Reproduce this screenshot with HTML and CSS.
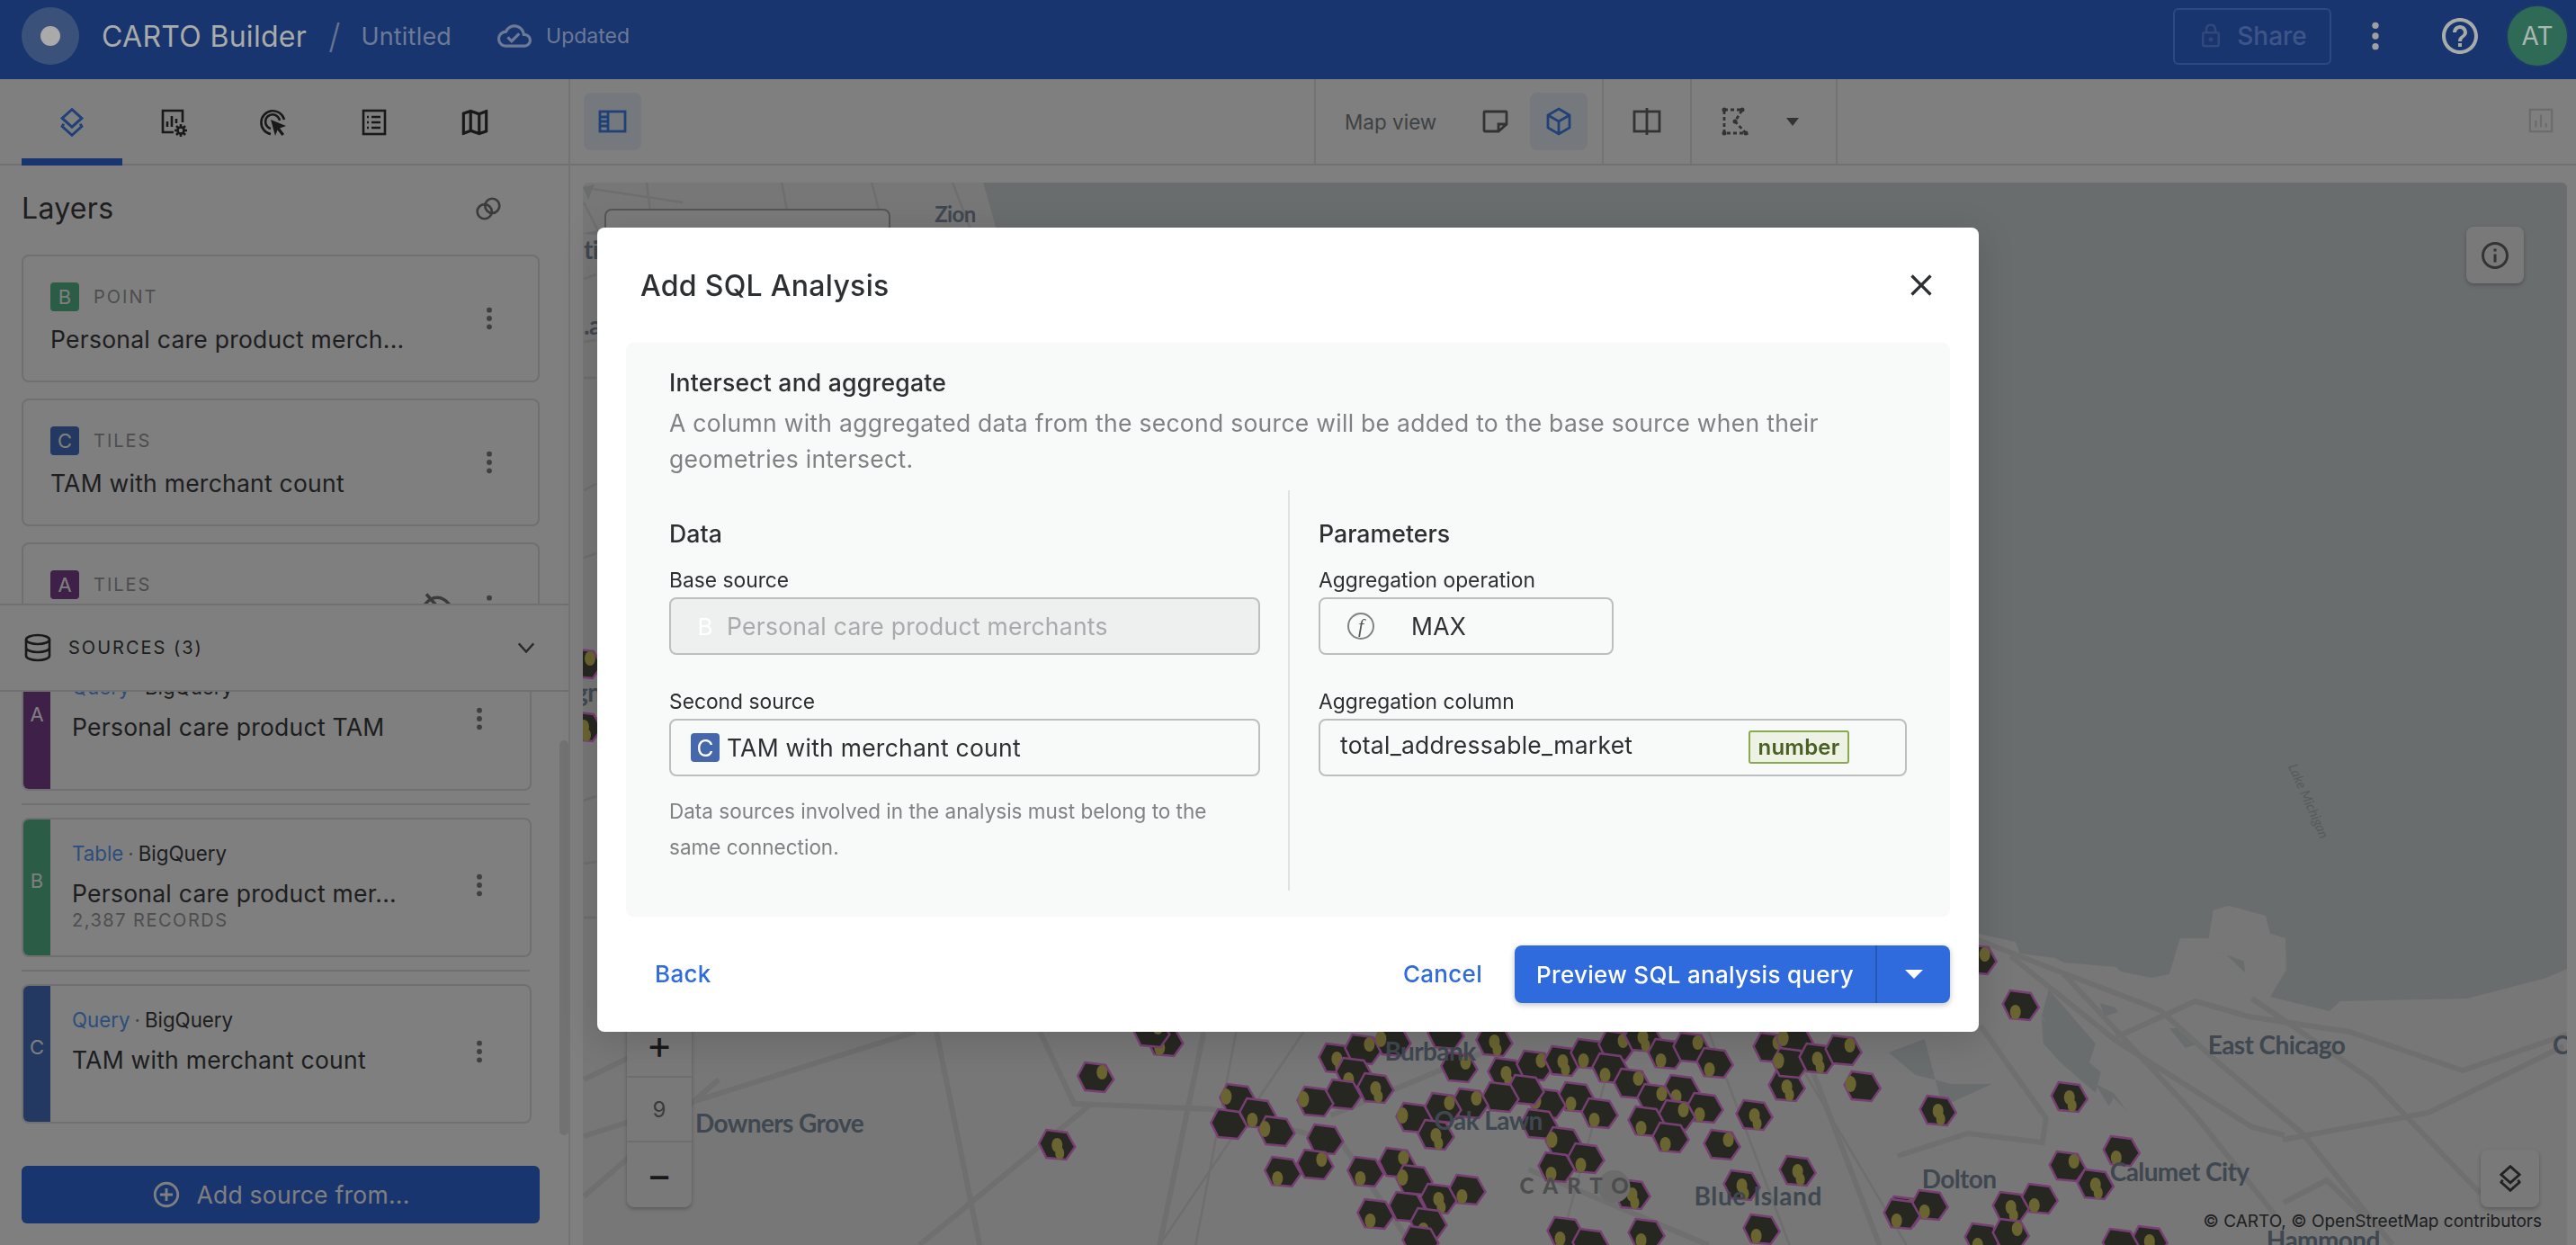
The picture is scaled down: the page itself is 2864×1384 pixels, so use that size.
FILE: index.html
```html
<!DOCTYPE html>
<html lang="en">
<head>
<meta charset="utf-8">
<title>CARTO Builder</title>
<link rel="stylesheet" href="styles.css">
</head>
<body>
<header class="topbar">
  <div class="logo"><span class="logo-dot"></span></div>
  <span class="brand">CARTO Builder</span>
  <span class="slash">/</span>
  <span class="doc-name">Untitled</span>
  <svg class="cloud" viewBox="0 0 24 24"><path d="M19.35 10.04C18.67 6.59 15.64 4 12 4 9.11 4 6.6 5.64 5.35 8.04 2.34 8.36 0 10.91 0 14c0 3.31 2.69 6 6 6h13c2.76 0 5-2.24 5-5 0-2.64-2.05-4.78-4.65-4.96zM19 18H6c-2.21 0-4-1.79-4-4 0-2.05 1.53-3.76 3.56-3.97l1.07-.11.5-.95C8.08 7.14 9.94 6 12 6c2.62 0 4.88 1.86 5.39 4.43l.3 1.5 1.53.11c1.56.1 2.78 1.41 2.78 2.96 0 1.65-1.35 3-3 3zm-9-3.82l-2.09-2.09L6.5 13.5 10 17l6.01-6.01-1.41-1.41z"/></svg>
  <span class="status">Updated</span>
  <div class="topbar-right">
    <div class="share">
      <svg class="share-lock" viewBox="0 0 24 24"><path d="M18 8h-1V6c0-2.76-2.24-5-5-5S7 3.24 7 6v2H6c-1.1 0-2 .9-2 2v10c0 1.1.9 2 2 2h12c1.1 0 2-.9 2-2V10c0-1.1-.9-2-2-2zM9 6c0-1.66 1.34-3 3-3s3 1.34 3 3v2H9V6zm9 14H6V10h12v10zm-6-3c1.1 0 2-.9 2-2s-.9-2-2-2-2 .9-2 2 .9 2 2 2z"/></svg>
      <span>Share</span>
    </div>
    <svg class="top-kebab" viewBox="0 0 24 24"><circle cx="12" cy="5" r="2.2"/><circle cx="12" cy="12" r="2.2"/><circle cx="12" cy="19" r="2.2"/></svg>
    <svg class="help" viewBox="0 0 24 24"><path d="M11 18h2v-2h-2v2zm1-16C6.48 2 2 6.48 2 12s4.48 10 10 10 10-4.48 10-10S17.52 2 12 2zm0 18c-4.41 0-8-3.59-8-8s3.59-8 8-8 8 3.59 8 8-3.59 8-8 8zm0-14c-2.21 0-4 1.79-4 4h2c0-1.1.9-2 2-2s2 .9 2 2c0 2-3 1.75-3 5h2c0-2.25 3-2.5 3-5 0-2.21-1.79-4-4-4z"/></svg>
    <div class="avatar">AT</div>
  </div>
</header>

<div class="workspace">
  <aside class="sidebar">
    <nav class="tabs">
      <div class="tab active">
        <svg class="tab-icon" viewBox="0 0 28 28"><path d="M14 1.5 23.5 10 14 18.5 4.500 10z"/><path d="M6 15.500 4.500 18 14 26.500 23.500 18 22 15.500"/></svg>
      </div>
      <div class="tab">
        <svg class="tab-icon" viewBox="0 0 32 32"><path d="M17 27H5V3h22v13"/><path d="M10 21v-6M15 21V9M20 17v-5"/><circle cx="25" cy="25" r="3.500"/><path d="M25 18v3M25 29v3M18 25h3M29 25h3M20 20l2 2M28 28l2 2M30 20l-2 2M22 28l-2 2"/></svg>
      </div>
      <div class="tab">
        <svg class="tab-icon" viewBox="0 0 32 32"><path d="M13 29A13 13 0 1 1 28 13"/><path d="M13 23a8 8 0 1 1 10-9"/><path class="solid" d="M13 13l17 7-7 2.500L28 29l-2.500 2-5-6.500L18 31z"/></svg>
      </div>
      <div class="tab">
        <svg class="tab-icon" viewBox="0 0 32 32"><rect x="4" y="3" width="24" height="26"/><path d="M13 10h10M13 16h10M13 22h10M8 10h2M8 16h2M8 22h2"/></svg>
      </div>
      <div class="tab">
        <svg class="tab-icon solid-icon" viewBox="0 0 24 24"><path d="M20.500 3l-.16.03L15 5.100 9 3 3.360 4.900c-.21.07-.36.25-.36.48V20.500c0 .28.22.5.5.5l.16-.03L9 18.900l6 2.100 5.640-1.900c.21-.07.36-.25.36-.48V3.500c0-.28-.22-.5-.5-.5zM10 5.470l4 1.400v11.660l-4-1.400V5.470zm-5 .99l3-1.010v11.700l-3 1.160V6.460zm14 11.080l-3 1.010V6.860l3-1.160v11.840z"/></svg>
      </div>
    </nav>

    <section class="layers-panel">
      <div class="panel-head">
        <h2 class="panel-title">Layers</h2>
        <svg class="link-icon" viewBox="0 0 28 28"><circle cx="10" cy="17" r="7.500"/><circle cx="18" cy="11" r="7.500"/></svg>
      </div>
      <article class="layer-card">
        <div class="layer-text">
          <div class="layer-type"><span class="chip chip-b">B</span><span>POINT</span></div>
          <div class="layer-name">Personal care product merch...</div>
        </div>
        <svg class="kebab" viewBox="0 0 24 24"><circle cx="12" cy="5" r="2.200"/><circle cx="12" cy="12" r="2.200"/><circle cx="12" cy="19" r="2.200"/></svg>
      </article>
      <article class="layer-card">
        <div class="layer-text">
          <div class="layer-type"><span class="chip chip-c">C</span><span>TILES</span></div>
          <div class="layer-name">TAM with merchant count</div>
        </div>
        <svg class="kebab" viewBox="0 0 24 24"><circle cx="12" cy="5" r="2.200"/><circle cx="12" cy="12" r="2.200"/><circle cx="12" cy="19" r="2.200"/></svg>
      </article>
      <article class="layer-card">
        <div class="layer-text">
          <div class="layer-type"><span class="chip chip-a">A</span><span>TILES</span></div>
          <div class="layer-name">Personal care product TAM</div>
        </div>
        <svg class="eye-off" viewBox="0 0 24 24"><path d="M2 12c3-4.500 6.500-6.500 10-6.500S19 7.500 22 12c-3 4.500-6.500 6.500-10 6.500S5 16.500 2 12zM4 3l16 18"/></svg>
        <svg class="kebab" viewBox="0 0 24 24"><circle cx="12" cy="5" r="2.200"/><circle cx="12" cy="12" r="2.200"/><circle cx="12" cy="19" r="2.200"/></svg>
      </article>
    </section>

    <div class="sources-bar">
      <svg class="db-icon" viewBox="0 0 32 32"><ellipse cx="16" cy="7" rx="13" ry="5"/><path d="M3 7v18c0 2.800 5.800 5 13 5s13-2.200 13-5V7M3 16c0 2.800 5.800 5 13 5s13-2.200 13-5"/></svg>
      <span class="sources-label">SOURCES (3)</span>
      <svg class="chev" viewBox="0 0 24 24"><path d="M3 7l9 10 9-10"/></svg>
    </div>

    <div class="source-list">
      <article class="source-card first">
        <div class="source-bar bar-a">A</div>
        <div class="source-text">
          <div class="source-kind"><span class="kind">Query</span><span class="sep">·</span><span>BigQuery</span></div>
          <div class="source-name">Personal care product TAM</div>
        </div>
        <svg class="kebab" viewBox="0 0 24 24"><circle cx="12" cy="5" r="2.200"/><circle cx="12" cy="12" r="2.200"/><circle cx="12" cy="19" r="2.200"/></svg>
      </article>
      <div class="source-divider"></div>
      <article class="source-card">
        <div class="source-bar bar-b">B</div>
        <div class="source-text">
          <div class="source-kind"><span class="kind">Table</span><span class="sep">·</span><span>BigQuery</span></div>
          <div class="source-name">Personal care product mer...</div>
          <div class="records">2,387 RECORDS</div>
        </div>
        <svg class="kebab" viewBox="0 0 24 24"><circle cx="12" cy="5" r="2.200"/><circle cx="12" cy="12" r="2.200"/><circle cx="12" cy="19" r="2.200"/></svg>
      </article>
      <div class="source-divider"></div>
      <article class="source-card">
        <div class="source-bar bar-c">C</div>
        <div class="source-text">
          <div class="source-kind"><span class="kind">Query</span><span class="sep">·</span><span>BigQuery</span></div>
          <div class="source-name">TAM with merchant count</div>
        </div>
        <svg class="kebab" viewBox="0 0 24 24"><circle cx="12" cy="5" r="2.200"/><circle cx="12" cy="12" r="2.200"/><circle cx="12" cy="19" r="2.200"/></svg>
      </article>
    </div>
    <div class="scroll-thumb"></div>

    <div class="add-wrap">
      <div class="add-btn">
        <svg class="add-icon" viewBox="0 0 24 24"><path d="M13 7h-2v4H7v2h4v4h2v-4h4v-2h-4V7zm-1-5C6.480 2 2 6.480 2 12s4.480 10 10 10 10-4.480 10-10S17.520 2 12 2zm0 18c-4.410 0-8-3.590-8-8s3.590-8 8-8 8 3.590 8 8-3.590 8-8 8z"/></svg>
        <span>Add source from...</span>
      </div>
    </div>
  </aside>

  <main class="stage">
    <div class="toolbar">
      <div class="tool-group left">
        <div class="tool-btn selected">
          <svg class="tool-icon blue" viewBox="0 0 32 32"><rect x="2" y="5" width="28" height="22"/><path d="M11 5v22M2 11h9M2 16h9M2 21h9"/></svg>
        </div>
      </div>
      <div class="tool-group view">
        <span class="map-view">Map view</span>
        <div class="tool-btn narrow">
          <svg class="tool-icon" viewBox="0 0 32 32"><path d="M29 19V6a1 1 0 0 0-1-1H5a1 1 0 0 0-1 1v20a1 1 0 0 0 1 1h15zM20 27v-8h9"/></svg>
        </div>
        <div class="tool-btn selected">
          <svg class="tool-icon blue" viewBox="0 0 32 32"><path d="M16 2 28 9v14l-12 7-12-7V9zM4 9l12 7 12-7M16 16v14"/></svg>
        </div>
      </div>
      <div class="tool-group split">
        <svg class="tool-icon" viewBox="0 0 32 32"><rect x="2" y="5" width="28" height="22"/><path d="M16 1v30"/></svg>
      </div>
      <div class="tool-group poly">
        <svg class="tool-icon" viewBox="0 0 32 32"><path stroke-dasharray="4 3" d="M4 3h20l-8 13 12 13H4z"/><circle cx="4" cy="3" r="2.500"/><circle cx="24" cy="3" r="2.500"/><circle cx="16" cy="16" r="2.500"/><circle cx="28" cy="29" r="2.500"/><circle cx="4" cy="29" r="2.500"/></svg>
        <span class="caret"></span>
      </div>
      <svg class="chart-toggle" viewBox="0 0 32 32"><rect x="3" y="3" width="26" height="26"/><path d="M10 24v-8M16 24V9M22 24v-5"/></svg>
    </div>

    <div class="map-wrap">
      <div class="map">
        <svg class="map-canvas" viewBox="649 203 2205 1181" preserveAspectRatio="none">
          <defs>
            <polygon id="hx" points="-12,-17 11,-14 20,2 10,16 -12,14 -20,-2"/>
            <g id="a"><use href="#hx"/><ellipse class="dot" cx="-6" cy="7" rx="6" ry="8"/></g>
            <g id="b"><use href="#hx"/><ellipse class="dot" cx="7" cy="-6" rx="6" ry="8"/></g>
            <g id="c"><use href="#hx"/><ellipse class="dot" cx="0" cy="0" rx="6" ry="8"/><ellipse class="dot" cx="3" cy="9" rx="5" ry="7"/></g>
            <g id="d"><use href="#hx"/><ellipse class="dot" cx="-13" cy="-3" rx="6" ry="9"/></g>
            <g id="e"><use href="#hx"/></g>
          </defs>
          <rect class="land" x="649" y="203" width="2205" height="1181"/>
          <polygon class="water" points="1094,203 1108,253 1200,1000 2200,1038 2241,1047 2246,1060 2285,1065 2295,1070 2353,1075 2358,1080 2392,1087 2412,1083 2424,1043 2451,1053 2495,1068 2497,1082 2456,1043 2461,1012 2478,1007 2519,1018 2524,1038 2541,1043 2542,1078 2524,1108 2590,1124 2602,1113 2743,1110 2831,1087 2854,1077 2854,203"/>
          <polygon class="land" points="2424,1043 2456,1043 2461,1012 2478,1007 2519,1018 2524,1038 2541,1043 2542,1078 2524,1108 2497,1085 2495,1068 2451,1053"/>
          <g class="water">
            <polygon points="2278,1100 2330,1160 2322,1185 2306,1175 2270,1130"/>
            <polygon points="2270,1132 2310,1170 2336,1192 2330,1215 2290,1180 2272,1160"/>
            <polygon points="2335,1115 2352,1120 2355,1125 2340,1130"/>
            <polygon points="2412,1143 2428,1143 2445,1160 2430,1165"/>
            <polygon points="2100,1170 2140,1155 2160,1230 2215,1205 2170,1205 2130,1195"/>
            <polygon points="2330,1205 2350,1215 2365,1235 2350,1220 2345,1230"/>
            <polygon points="649,208 662,205 655,222"/>
            <polygon points="648,260 690,250 680,262"/>
          </g>
          <g class="road-thin">
            <path d="M660 210 L760 225M720 203 L725 245M870 203 L880 255M970 203 L985 260M1060 203 L1080 255M650 225 L690 305M650 310L664 305M650 380L664 378M650 420L664 420M650 545L664 538M650 620L664 615M650 890L664 885M650 960L664 958M650 1020L664 1020"/>
            <path d="M1450 1147 L1290 1384M1375 1147 L1330 1384M1980 1147 L2120 1384M1900 1147 L1990 1384M1800 1147 L1735 1384"/>
          </g>
          <g class="road">
            <path d="M2200 1045 L2295 1082 L2402 1123 L2465 1180 L2560 1260 L2660 1384"/>
            <path d="M2236 1063 L2353 1157 L2504 1253 L2540 1262"/>
            <path d="M2295 1083 L2441 1240 L2529 1350"/>
            <path d="M2353 1153 L2441 1113 L2500 1130 L2612 1147 L2738 1190 L2854 1150"/>
            <path d="M2538 1267 L2700 1237 L2850 1163"/>
            <path d="M2504 1110 L2636 1200 L2758 1327"/>
            <path d="M2202 1140 L2275 1243 L2271 1270 L2188 1260 L2110 1285"/>
            <path d="M2539 1337 L2587 1312 L2626 1350"/>
            <path d="M1018 1147 L650 1263M1042 1147 L1090 1384M1157 1147 L1195 1227 L1348 1233 L1492 1270 L1570 1384M1214 1227 L1023 1384"/>
            <path d="M1339 1147 L1290 1384M1480 1240 L1650 1170M1700 1300 L1900 1384M2000 1150 L2090 1384M650 1200 L760 1147M650 1330 L800 1200"/>
          </g>
          <g class="hexes">
            <use href="#a" x="1296" y="1158"/><use href="#b" x="1281" y="1148"/><use href="#b" x="1219" y="1198"/><use href="#c" x="1176" y="1273"/><use href="#d" x="1377" y="1222"/><use href="#a" x="1399" y="1238"/><use href="#e" x="1367" y="1250"/><use href="#d" x="1420" y="1258"/><use href="#e" x="1474" y="1267"/><use href="#b" x="1463" y="1295"/><use href="#a" x="1427" y="1303"/><use href="#c" x="1487" y="1177"/><use href="#b" x="1516" y="1167"/><use href="#d" x="1549" y="1158"/><use href="#a" x="1506" y="1193"/><use href="#c" x="1530" y="1210"/><use href="#e" x="1494" y="1217"/><use href="#d" x="1463" y="1225"/><use href="#b" x="1623" y="1187"/><use href="#c" x="1662" y="1158"/><use href="#e" x="1608" y="1150"/><use href="#c" x="1675" y="1193"/><use href="#b" x="1707" y="1185"/><use href="#c" x="1738" y="1180"/><use href="#a" x="1767" y="1172"/><use href="#b" x="1798" y="1163"/><use href="#c" x="1827" y="1153"/><use href="#a" x="1853" y="1172"/><use href="#b" x="1881" y="1165"/><use href="#a" x="1907" y="1182"/><use href="#a" x="1791" y="1188"/><use href="#b" x="1815" y="1205"/><use href="#a" x="1870" y="1212"/><use href="#b" x="1841" y="1222"/><use href="#a" x="1896" y="1232"/><use href="#b" x="1865" y="1240"/><use href="#a" x="1831" y="1247"/><use href="#a" x="1858" y="1265"/><use href="#c" x="1951" y="1240"/><use href="#b" x="1915" y="1273"/><use href="#a" x="1753" y="1220"/><use href="#a" x="1779" y="1238"/><use href="#d" x="1721" y="1227"/><use href="#e" x="1697" y="1212"/><use href="#e" x="1669" y="1220"/><use href="#b" x="1635" y="1227"/><use href="#b" x="1605" y="1232"/><use href="#d" x="1573" y="1243"/><use href="#c" x="1597" y="1262"/><use href="#e" x="1712" y="1250"/><use href="#d" x="1739" y="1270"/><use href="#a" x="1764" y="1288"/><use href="#a" x="1731" y="1298"/><use href="#b" x="1554" y="1293"/><use href="#a" x="1519" y="1303"/><use href="#d" x="1573" y="1312"/><use href="#a" x="1632" y="1323"/><use href="#c" x="1600" y="1333"/><use href="#e" x="1565" y="1342"/><use href="#a" x="1530" y="1350"/><use href="#a" x="1589" y="1360"/><use href="#e" x="1580" y="1380"/><use href="#a" x="1741" y="1370"/><use href="#e" x="1769" y="1383"/><use href="#a" x="1831" y="1372"/><use href="#c" x="1815" y="1328"/><use href="#c" x="1937" y="1318"/><use href="#c" x="1999" y="1302"/><use href="#a" x="1959" y="1367"/><use href="#d" x="2071" y="1208"/><use href="#c" x="1987" y="1208"/><use href="#b" x="1970" y="1165"/><use href="#d" x="1996" y="1157"/><use href="#d" x="1991" y="1182"/><use href="#c" x="2021" y="1177"/><use href="#b" x="2050" y="1168"/><use href="#b" x="2118" y="1347"/><use href="#b" x="2200" y="1067"/><use href="#a" x="2247" y="1118"/><use href="#c" x="2301" y="1220"/><use href="#c" x="2155" y="1235"/><use href="#a" x="2359" y="1280"/><use href="#b" x="2299" y="1297"/><use href="#c" x="2330" y="1317"/><use href="#a" x="2268" y="1333"/><use href="#c" x="2236" y="1342"/><use href="#a" x="2146" y="1340"/><use href="#a" x="2115" y="1350"/><use href="#a" x="2205" y="1377"/><use href="#b" x="2236" y="1372"/><use href="#c" x="2390" y="1380"/><use href="#e" x="2358" y="1383"/><use href="#b" x="650" y="738"/><use href="#c" x="650" y="808"/>
          </g>
          <g class="labels">
            <text x="1040" y="247" class="lab-sm">Zion</text>
            <text x="650" y="288">tic</text>
            <text x="650" y="372">.a</text>
            <text x="640" y="780">gn</text>
            <text x="774" y="1259">Downers Grove</text>
            <text x="1540" y="1179">Burbank</text>
            <text x="1595" y="1256">Oak Lawn</text>
            <text x="1884" y="1340" class="wide">Blue Island</text>
            <text x="2137" y="1321">Dolton</text>
            <text x="2346" y="1313">Calumet City</text>
            <text x="2455" y="1172">East Chicago</text>
            <text x="2520" y="1389">Hammond</text>
            <text x="2838" y="1172">C</text>
            <text class="lake" transform="translate(2544 852) rotate(66)">Lake Michigan</text>
          </g>
          <circle class="wm-circle" cx="1795" cy="1319" r="18"/>
          <text class="watermark" x="1690" y="1327">CARTO</text>
        </svg>
        <div class="map-search"></div>
        <div class="map-btn info">
          <svg class="map-btn-icon" viewBox="0 0 24 24"><path d="M11 7h2v2h-2zm0 4h2v6h-2zm1-9C6.480 2 2 6.480 2 12s4.480 10 10 10 10-4.480 10-10S17.520 2 12 2zm0 18c-4.410 0-8-3.590-8-8s3.590-8 8-8 8 3.590 8 8-3.590 8-8 8z"/></svg>
        </div>
        <div class="zoom-ctl">
          <div class="zoom-cell zoom-sym">+</div>
          <div class="zoom-cell zoom-num">9</div>
          <div class="zoom-cell zoom-sym">−</div>
        </div>
        <div class="map-btn basemap">
          <svg class="basemap-icon" viewBox="0 0 28 28"><path d="M14 1.500 23.500 10 14 18.500 4.500 10z"/><path d="M6 15.500 4.500 18 14 26.500 23.500 18 22 15.500"/></svg>
        </div>
        <div class="attrib">© CARTO, © OpenStreetMap contributors</div>
      </div>
    </div>
  </main>
</div>

<div class="scrim"></div>

<div class="dialog-layer">
  <div class="dialog" role="dialog">
    <div class="dialog-head">
      <h1 class="dialog-title">Add SQL Analysis</h1>
      <svg class="close" viewBox="0 0 24 24"><path d="M19 6.410 17.590 5 12 10.590 6.410 5 5 6.410 10.590 12 5 17.590 6.410 19 12 13.410 17.590 19 19 17.590 13.410 12z"/></svg>
    </div>
    <div class="dialog-body">
      <h3 class="body-title">Intersect and aggregate</h3>
      <p class="body-desc">A column with aggregated data from the second source will be added to the base source when their geometries intersect.</p>
      <div class="cols">
        <div class="col col-left">
          <h4 class="col-title">Data</h4>
          <label class="field-label">Base source</label>
          <div class="field disabled"><span class="field-chip ghost">B</span><span>Personal care product merchants</span></div>
          <label class="field-label second">Second source</label>
          <div class="field"><span class="field-chip solid-c">C</span><span>TAM with merchant count</span></div>
          <p class="helper">Data sources involved in the analysis must belong to the same connection.</p>
        </div>
        <div class="col col-right">
          <h4 class="col-title">Parameters</h4>
          <label class="field-label">Aggregation operation</label>
          <div class="field op">
            <span class="fx">f</span>
            <span>MAX</span>
          </div>
          <label class="field-label second">Aggregation column</label>
          <div class="field column">
            <span>total_addressable_market</span>
            <span class="tag">number</span>
          </div>
        </div>
      </div>
    </div>
    <div class="dialog-foot">
      <span class="text-btn back">Back</span>
      <span class="text-btn cancel">Cancel</span>
      <div class="primary">
        <span class="primary-main">Preview SQL analysis query</span>
        <span class="primary-drop"><span class="primary-caret"></span></span>
      </div>
    </div>
  </div>
</div>
</body>
</html>
```

FILE: styles.css
```css
* { box-sizing: border-box; }
html, body { margin: 0; height: 100%; }
body {
  width: 2864px;
  height: 1384px;
  overflow: hidden;
  font-family: Inter, "Noto Sans", sans-serif;
  color: #3c4043;
  background: #fff;
  display: flex;
  flex-direction: column;
}
h1, h2, h3, h4, p { margin: 0; font-weight: inherit; }
svg { display: block; flex: none; }

/* top bar sits above the scrim */
.topbar {
  position: relative;
  z-index: 2;
  height: 88px;
  flex: none;
  background: #19356f;
  display: flex;
  align-items: center;
  padding: 0 0 8px 24px;
  color: #a9aba8;
}
.logo {
  width: 64px; height: 64px; border-radius: 50%;
  background: #3a5279;
  display: flex; align-items: center; justify-content: center;
  margin-right: 25px;
}
.logo-dot { width: 22px; height: 22px; border-radius: 50%; background: #aaa; }
.brand { font-size: 32px; letter-spacing: .3px; }
.slash { font-size: 38px; margin-left: 24px; color: #66758f; font-weight: 300; }
.doc-name { font-size: 27px; margin-left: 23px; color: #6c7a96; letter-spacing: .2px; }
.cloud { width: 38px; height: 38px; margin-left: 51px; fill: #6c7a96; }
.status { font-size: 23px; margin-left: 16px; color: #6c7a96; }
.topbar-right { margin-left: auto; display: flex; align-items: center; padding-right: 8px; }
.share {
  width: 176px; height: 63px;
  border: 2px solid #2c4a80; border-radius: 6px;
  display: flex; align-items: center; justify-content: center; gap: 14px;
  font-size: 28px; font-weight: 500; color: #3d5587;
}
.share-lock { width: 30px; height: 30px; fill: #30487a; }
.top-kebab { width: 40px; height: 40px; margin-left: 29px; fill: #a0a0a0; }
.help { width: 48px; height: 48px; margin-left: 50px; fill: #a9aba8; margin-right: 0; }
.avatar {
  width: 70px; height: 70px; border-radius: 50%;
  margin-left: 27px;
  background: #2f6a57; border: 2px solid #1c3a6a;
  display: flex; align-items: center; justify-content: center;
  font-size: 28px; color: #a9b8b0;
}

.workspace { flex: 1; display: flex; min-height: 0; }

/* sidebar */
.sidebar {
  position: relative;
  width: 634px;
  flex: none;
  border-right: 2px solid #e6e6e6;
  display: flex;
  flex-direction: column;
  background: #fefefe;
}
.tabs {
  height: 96px; flex: none;
  display: flex;
  padding-left: 24px;
  border-bottom: 2px solid #e2e2e2;
}
.tab {
  width: 112px;
  height: 96px;
  display: flex; align-items: center; justify-content: center;
  padding-bottom: 0;
  color: #333;
}
.tab.active { border-bottom: 8px solid #326ade; color: #3f83f0; padding-top: 0; }
.tab-icon { width: 32px; height: 32px; fill: none; stroke: currentColor; stroke-width: 2.6; }
.tab-icon .solid { fill: currentColor; stroke: none; }
.tab.active .tab-icon { margin-top: 8px; }
.solid-icon { fill: currentColor; stroke: none; width: 38px; height: 38px; }

.layers-panel {
  height: 487px; flex: none;
  overflow: hidden;
  padding: 0 32px 0 24px;
}
.panel-head {
  height: 99px;
  display: flex; align-items: center; justify-content: space-between;
  padding: 0 42px 4px 0;
}
.panel-title { font-size: 32px; font-weight: 400; color: #3a3d40; letter-spacing: .3px; }
.link-icon { width: 30px; height: 30px; fill: none; stroke: #777; stroke-width: 2.500; }

.layer-card {
  height: 142px;
  margin-bottom: 18px;
  border: 2px solid #e0e0e0;
  border-radius: 8px;
  display: flex;
  align-items: center;
  padding: 0 38px 0 30px;
}
.layer-text { flex: 1; min-width: 0; padding-top: 3px; }
.layer-type {
  display: flex; align-items: center; gap: 16px;
  font-size: 20px; letter-spacing: 2px; color: #9a9c9e;
}
.layer-name { font-size: 26.5px; color: #3a3d40; margin-top: 11px; line-height: 40px; letter-spacing: .25px; }
.chip {
  width: 32px; height: 32px; border-radius: 4px;
  display: flex; align-items: center; justify-content: center;
  font-size: 22px; letter-spacing: 0; color: #fff;
}
.chip-b { background: #54b88c; }
.chip-c { background: #4872c4; }
.chip-a { background: #7c4090; }
.kebab { width: 32px; height: 32px; fill: #808080; margin-top: 0; }
.eye-off { width: 36px; height: 36px; fill: none; stroke: #777; stroke-width: 2.400; margin-right: 24px; }

.sources-bar {
  position: relative;
  z-index: 1;
  height: 98px; flex: none;
  background: #fff;
  border-top: 2px solid #e0e0e0;
  border-bottom: 2px solid #e0e0e0;
  display: flex; align-items: center;
  padding-left: 26px;
}
.db-icon { width: 32px; height: 32px; fill: none; stroke: #333; stroke-width: 2.600; }
.sources-label { font-size: 20px; letter-spacing: 2px; margin-left: 18px; color: #3a3d40; }
.chev { width: 22px; height: 22px; fill: none; stroke: #555; stroke-width: 2.600; margin-left: auto; margin-right: 36px; }

.source-list {
  height: 501px; flex: none;
  overflow: hidden;
  padding-left: 24px;
  width: 591px;
}
.source-card {
  height: 155px;
  border: 2px solid #e0e0e0;
  border-radius: 8px;
  display: flex;
  align-items: center;
  padding-right: 40px;
  overflow: hidden;
}
.source-card.first { margin-top: -45px; }
.source-divider { height: 2px; margin: 14px 2px 14px 0; background: #e0e0e0; }
.source-bar {
  width: 30px; align-self: stretch; flex: none;
  display: flex; align-items: center; justify-content: center;
  font-size: 22px; color: #fff;
  padding-bottom: 16px;
}
.bar-a { background: #7c4090; }
.bar-b { background: #54b88c; }
.bar-c { background: #4872c4; }
.source-text { flex: 1; min-width: 0; padding-left: 24px; align-self: stretch; padding-top: 22px; }
.source-kind { font-size: 22.3px; color: #3a3d40; line-height: 32px; display: flex; }
.kind { color: #5a9cf8; }
.sep { margin: 0 5px; color: #888; }
.source-name { font-size: 26.5px; color: #3a3d40; line-height: 40px; margin-top: 8px; letter-spacing: .25px; }
.records { font-size: 20px; letter-spacing: 1.500px; color: #9a9c9e; line-height: 22px; margin-top: -1px; }
.source-card .kebab { margin-top: -6px; }

.scroll-thumb {
  position: absolute;
  left: 622px; top: 735px;
  width: 10px; height: 439px;
  border-radius: 5px;
  background: #e4e4e4;
}

.add-wrap { padding: 26px 32px 0 24px; flex: none; }
.add-btn {
  height: 64px; border-radius: 6px;
  background: #316adf;
  color: #fff;
  display: flex; align-items: center; justify-content: center; gap: 16px;
  font-size: 26.5px; letter-spacing: .25px;
}
.add-icon { width: 34px; height: 34px; fill: #fff; }

/* toolbar and map */
.stage { flex: 1; min-width: 0; display: flex; flex-direction: column; }
.toolbar {
  height: 96px; flex: none;
  display: flex;
  border-bottom: 2px solid #e2e2e2;
  position: relative;
}
.tool-group { display: flex; align-items: center; height: 94px; border-right: 2px solid #e6e6e6; }
.tool-group.left { width: 829px; padding-left: 15px; }
.tool-group.view { width: 320px; padding-left: 32px; }
.tool-group.split { width: 98px; justify-content: center; }
.tool-group.poly { width: 162px; padding-left: 32px; }
.tool-btn {
  width: 64px; height: 64px; border-radius: 8px;
  display: flex; align-items: center; justify-content: center;
}
.tool-btn.selected { background: #eaf2fb; }
.tool-btn.narrow { width: 40px; margin-left: 44px; margin-right: 19px; }
.tool-icon { width: 32px; height: 32px; fill: none; stroke: #666; stroke-width: 2.800; }
.tool-icon circle { fill: #666; stroke: none; }
.tool-icon.blue { stroke: #3f83f0; }
.map-view { font-size: 22.5px; color: #7f8284; white-space: nowrap; width: 103px; }
.caret {
  width: 0; height: 0; margin-left: 41px;
  border-left: 7px solid transparent; border-right: 7px solid transparent;
  border-top: 9px solid #666;
}
.chart-toggle {
  position: absolute; right: 24px; top: 30px;
  width: 30px; height: 32px;
  fill: none; stroke: #d8d8d8; stroke-width: 2.400;
}

.map-wrap { flex: 1; min-height: 0; padding: 19px 10px 0 14px; }
.map { position: relative; width: 100%; height: 100%; border-radius: 6px 6px 0 0; overflow: hidden; background: #eee; }
.map-canvas { display: block; width: 100%; height: 100%; }
.land { fill: #eeeeee; }
.water, .water polygon { fill: #d2dadc; }
.road path { fill: none; stroke: #dedede; stroke-width: 6; }
.road-thin path { fill: none; stroke: #dcdcdc; stroke-width: 2.500; }
#hx { fill: #4e4e44; stroke: #f07ee8; stroke-width: 2.500; }
.dot { fill: #d4c862; }
.labels text { font-family: Lato, sans-serif; font-weight: 700; font-size: 28px; fill: #7e8ea2; letter-spacing: -.6px; }
.labels .wide { letter-spacing: .6px; }
.labels .lab-sm { font-size: 24px; }
.labels .lake { font-style: italic; font-weight: 400; font-size: 15px; fill: #b0b6b8; letter-spacing: 0; }
.watermark { font-family: Lato, sans-serif; font-weight: 900; font-size: 24px; letter-spacing: 10px; fill: #9a9a9a; }
.wm-circle { fill: #d8d8d8; }

.map-search {
  position: absolute; left: 24px; top: 29px;
  width: 318px; height: 120px;
  background: #f4f4f4;
  border: 2px solid #aaa; border-radius: 8px;
}
.map-btn {
  position: absolute;
  border-radius: 8px;
  background: #f2f2f2;
  box-shadow: 0 2px 4px rgba(0,0,0,.25);
  display: flex; align-items: center; justify-content: center;
}
.info { right: 48px; top: 49px; width: 64px; height: 63px; }
.map-btn-icon { width: 36px; height: 36px; fill: #666; }
.basemap { right: 31px; bottom: 42px; width: 65px; height: 64px; }
.basemap-icon { width: 30px; height: 30px; fill: none; stroke: #444; stroke-width: 2.600; }
.zoom-ctl {
  position: absolute; left: 49px; bottom: 42px;
  width: 72px;
  background: #f2f2f2; border-radius: 0 0 8px 8px;
  box-shadow: 0 2px 4px rgba(0,0,0,.25);
}
.zoom-cell { height: 72px; display: flex; align-items: center; justify-content: center; color: #333; border-bottom: 2px solid #ddd; }
.zoom-cell:last-child { border-bottom: 0; }
.zoom-sym { font-size: 44px; font-weight: 400; }
.zoom-num { font-size: 24px; color: #777; }
.attrib {
  position: absolute; right: 28px; bottom: 15px;
  font-size: 19px; color: #3c4043; white-space: nowrap;
}

/* modal */
.scrim {
  position: fixed; left: 0; top: 0; right: 0; bottom: 0;
  z-index: 1;
  background: rgba(0,0,0,.5);
}
.dialog-layer {
  position: fixed; left: 0; top: 0; right: 0; bottom: 0;
  z-index: 3;
  display: flex; justify-content: center; align-items: flex-start;
  padding-top: 253px;
}
.dialog {
  width: 1536px; height: 894px;
  background: #fff;
  border-radius: 8px;
  padding: 0 32px;
  box-shadow: 0 8px 40px rgba(0,0,0,.15);
  display: flex; flex-direction: column;
  color: #2c3032;
}
.dialog-head {
  height: 128px; flex: none;
  display: flex; align-items: center; justify-content: space-between;
  padding: 0 0 0 16px;
}
.dialog-title { font-size: 32px; font-weight: 500; letter-spacing: .3px; }
.close { width: 40px; height: 40px; fill: #2c3032; margin-right: 12px; }
.dialog-body {
  height: 638px; flex: none;
  background: #f8f9f9;
  border-radius: 8px;
  padding: 26px 48px 0;
}
.body-title { font-size: 26.6px; font-weight: 500; line-height: 36px; letter-spacing: .2px; }
.body-desc { font-size: 26.5px; line-height: 40px; color: #7f8284; margin-top: 7px; letter-spacing: .28px; }
.cols { display: flex; height: 445px; margin-top: 15px; }
.col { padding-top: 30px; }
.col-left { width: 690px; padding-right: 34px; border-right: 2px solid #e0e2e2; }
.col-right { flex: 1; padding-left: 32px; }
.col-title { font-size: 26.7px; font-weight: 500; line-height: 36px; }
.field-label { display: block; font-size: 22.8px; line-height: 32px; margin-top: 18px; margin-bottom: 3px; }
.field-label.second { margin-top: 36px; }
.field {
  height: 64px;
  border: 2px solid #bdbfbf; border-radius: 8px;
  display: flex; align-items: center;
  font-size: 26.5px; letter-spacing: .25px;
}
.col-left .field { width: 657px; }
.field-chip {
  width: 32px; height: 32px; flex: none; border-radius: 4px;
  display: flex; align-items: center; justify-content: center;
  margin: 0 8px 0 22px;
  font-size: 26px; letter-spacing: 0;
}
.solid-c { background: #4568ad; color: #fff; }
.ghost { color: #fff; }
.disabled { background: #eeefef; color: #a8aaac; }
.helper { font-size: 22.5px; line-height: 40px; color: #7f8284; margin-top: 19px; }
.op { width: 328px; }
.fx {
  width: 30px; height: 30px; flex: none; border-radius: 50%;
  border: 2px solid #808284;
  display: flex; align-items: center; justify-content: center;
  font-family: "Liberation Serif", serif; font-style: italic; font-size: 22px; color: #555;
  margin: 0 41px 0 30px;
  letter-spacing: 0;
}
.column { padding-left: 22px; padding-bottom: 6px; position: relative; }
.tag {
  position: absolute; left: 476px; top: 11px;
  width: 112px; height: 37px;
  border: 2px solid #8aaa4f; border-radius: 3px;
  background: #edf2e4;
  color: #4a6023; font-size: 24px; font-weight: 600;
  display: flex; align-items: center; justify-content: center;
  letter-spacing: .2px;
}
.dialog-foot {
  flex: 1;
  display: flex; align-items: flex-start;
  padding-top: 32px;
}
.text-btn { font-size: 26px; font-weight: 500; color: #2f6bdc; line-height: 64px; letter-spacing: .3px; }
.back { margin-left: 32px; }
.cancel { margin-left: auto; margin-right: 36px; }
.primary {
  width: 484px; height: 64px;
  background: #2f6bdc; color: #fff;
  border-radius: 8px;
  box-shadow: 0 2px 6px rgba(0,0,0,.25);
  display: flex; align-items: stretch;
  font-size: 26px; font-weight: 500; letter-spacing: .3px;
}
.primary-main { width: 403px; display: flex; align-items: center; justify-content: center; border-right: 2px solid #2557b5; }
.primary-drop { flex: 1; display: flex; align-items: center; justify-content: center; }
.primary-caret {
  width: 0; height: 0;
  border-left: 10px solid transparent; border-right: 10px solid transparent;
  border-top: 10px solid #fff;
}
```
